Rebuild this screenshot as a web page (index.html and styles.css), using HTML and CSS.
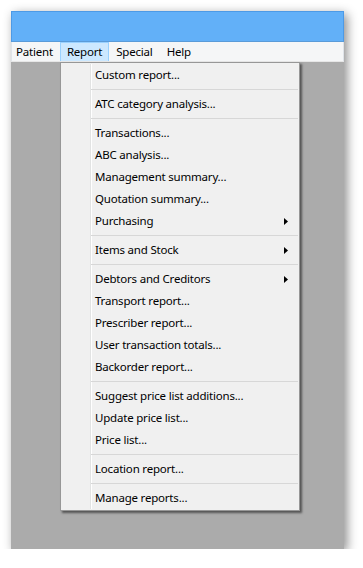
FILE: index.html
```html
<!DOCTYPE html>
<html lang="en">
<head>
  <meta charset="UTF-8">
  <title>Report menu</title>
  <link rel="stylesheet" href="styles.css">
</head>
<body>

<div class="window">
  <div class="titlebar"></div>

  <div class="menubar">
    <span class="menubar-item">Patient</span>
    <span class="menubar-item open">Report</span>
    <span class="menubar-item">Special</span>
    <span class="menubar-item">Help</span>
  </div>

  <div class="client">
    <div class="popup">
      <div class="item">Custom report...</div>
      <div class="sep"></div>
      <div class="item">ATC category analysis...</div>
      <div class="sep"></div>
      <div class="item">Transactions...</div>
      <div class="item">ABC analysis...</div>
      <div class="item">Management summary...</div>
      <div class="item">Quotation summary...</div>
      <div class="item sub">Purchasing <svg width="4" height="7" viewBox="0 0 4 7"><polygon points="0,0 4,3.5 0,7" fill="#000"/></svg></div>
      <div class="sep"></div>
      <div class="item sub">Items and Stock <svg width="4" height="7" viewBox="0 0 4 7"><polygon points="0,0 4,3.5 0,7" fill="#000"/></svg></div>
      <div class="sep"></div>
      <div class="item sub">Debtors and Creditors <svg width="4" height="7" viewBox="0 0 4 7"><polygon points="0,0 4,3.5 0,7" fill="#000"/></svg></div>
      <div class="item">Transport report...</div>
      <div class="item">Prescriber report...</div>
      <div class="item">User transaction totals...</div>
      <div class="item">Backorder report...</div>
      <div class="sep"></div>
      <div class="item">Suggest price list additions...</div>
      <div class="item">Update price list...</div>
      <div class="item">Price list...</div>
      <div class="sep"></div>
      <div class="item">Location report...</div>
      <div class="sep"></div>
      <div class="item">Manage reports...</div>
    </div>
  </div>
</div>

</body>
</html>
```

FILE: styles.css
```css
* { margin: 0; padding: 0; box-sizing: border-box; }

body {
  font-family: 'Noto Sans', 'Open Sans', sans-serif;
  font-size: 11.5px;
  letter-spacing: -0.2px;
  color: #000;
  background: #fff;
}

/* Window */
.window {
  margin: 11px 0 0 11px;
  width: 333px;
  height: 538px;
  display: flex;
  flex-direction: column;
  box-shadow: 3px 3px 10px rgba(0, 0, 0, 0.45);
}

.titlebar {
  height: 31px;
  background: #62b0f8;
  border: 1px solid #4d9ae6;
  border-bottom-color: #5a9bd8;
}

.menubar {
  height: 20px;
  display: flex;
  align-items: stretch;
  background: #f5f6f7;
  border-left: 1px solid #dfe3e8;
  border-right: 1px solid #dfe3e8;
  border-bottom: 1px solid #e6e6e6;
}

.menubar-item {
  display: flex;
  align-items: center;
  padding: 0 6px 2px;
  border: 1px solid transparent;
  border-bottom: none;
}

.menubar-item:first-child {
  padding-left: 3px;
}

.menubar-item.open {
  background: #cce8ff;
  border-color: #99d1ff;
}

/* Client area */
.client {
  flex: 1;
  position: relative;
  background: #ababab;
}

/* Popup menu */
.popup {
  position: absolute;
  left: 49px;
  top: 0;
  width: 240px;
  padding: 1px;
  background: #f0f0f0;
  border: 1px solid #979797;
  box-shadow: 2px 2px 2px rgba(0, 0, 0, 0.5);
}

.popup::before {
  content: '';
  position: absolute;
  left: 29px;
  top: 1px;
  bottom: 1px;
  width: 1px;
  background: #e2e3e3;
  border-right: 1px solid #fff;
}

.item {
  height: 22px;
  display: flex;
  align-items: center;
  justify-content: space-between;
  padding: 0 10px 2px 33px;
}

.item svg {
  margin-top: 2px;
}

.sep {
  height: 7px;
  margin-left: 29px;
  position: relative;
}

.sep::after {
  content: '';
  position: absolute;
  left: 0;
  right: 0;
  top: 3px;
  height: 1px;
  background: #d7d7d7;
}
```
